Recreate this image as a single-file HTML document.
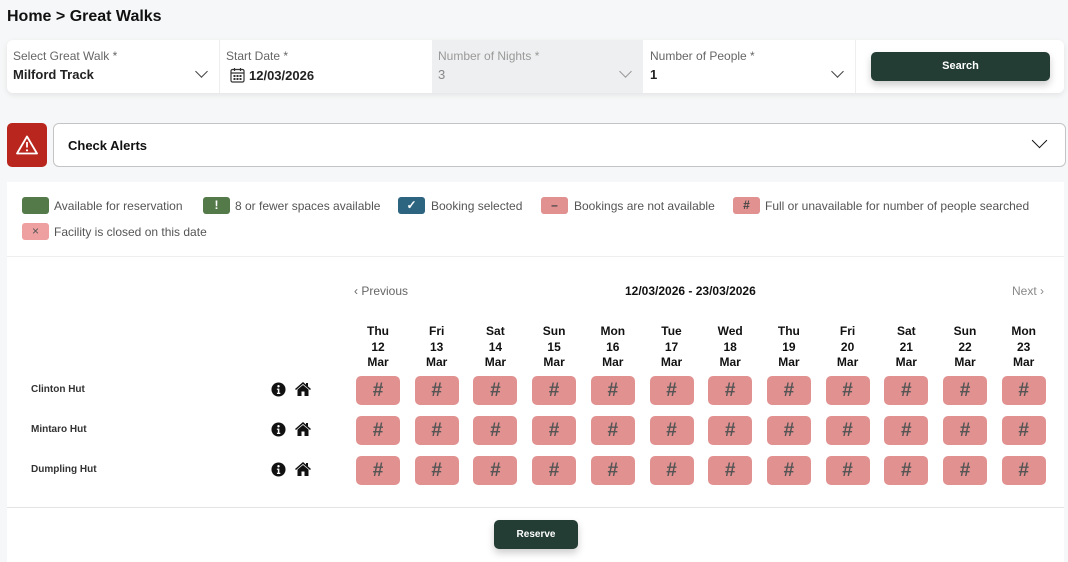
<!DOCTYPE html>
<html><head><meta charset="utf-8"><style>
*{box-sizing:border-box;margin:0;padding:0}
body{width:1068px;height:557px;background:#f6f7f8;font-family:"Liberation Sans",sans-serif;position:relative;overflow:hidden;color:#111}
.a{position:absolute}
.lbl{font-size:12px;color:#666}
.val{font-size:13px;color:#222;font-weight:bold}
.chev{position:absolute;width:9px;height:9px;border-right:1.4px solid #444;border-bottom:1.4px solid #444;transform:rotate(45deg)}
.sw{position:absolute;width:27px;height:17px;border-radius:3px;color:#fff;font-size:12px;font-weight:bold;text-align:center;line-height:17px}
.lt{position:absolute;font-size:12px;color:#555}
.cell{position:absolute;width:44px;height:29px;background:#e09190;border-radius:5px;color:#555;font-size:19px;font-weight:bold;text-align:center;line-height:29px}
.day{position:absolute;width:50px;text-align:center;font-size:12px;font-weight:bold;line-height:15.5px}
.hut{position:absolute;left:31px;font-size:10px;font-weight:bold;color:#333}
</style></head><body>
<div class="a" style="left:7px;top:8px;font-size:16px;font-weight:bold">Home &gt; Great Walks</div>

<div class="a" style="left:7px;top:40px;width:1057px;height:53px;background:#fff;border-radius:6px;box-shadow:0 2px 6px rgba(0,0,0,.08);overflow:hidden">
 <div class="a" style="left:212px;top:0;width:1px;height:53px;background:#eee"></div>
 <div class="a" style="left:425px;top:0;width:211px;height:53px;background:#eeeff0"></div>
 <div class="a" style="left:848px;top:0;width:1px;height:53px;background:#eee"></div>
 <div class="a lbl" style="left:6px;top:9px">Select Great Walk *</div>
 <div class="a val" style="left:6px;top:27px">Milford Track</div>
 <div class="chev" style="left:190px;top:27px"></div>
 <div class="a lbl" style="left:219px;top:9px">Start Date *</div>
 <svg class="a" style="left:223px;top:27px" width="15" height="16" viewBox="0 0 15 16"><rect x="1" y="2.5" width="13" height="12.5" rx="1.5" fill="none" stroke="#333" stroke-width="1.2"/><line x1="1" y1="6" x2="14" y2="6" stroke="#333" stroke-width="1.2"/><line x1="4.5" y1="1" x2="4.5" y2="4" stroke="#333" stroke-width="1.2"/><line x1="10.5" y1="1" x2="10.5" y2="4" stroke="#333" stroke-width="1.2"/><g fill="#333"><rect x="3.5" y="8" width="2" height="2"/><rect x="6.5" y="8" width="2" height="2"/><rect x="9.5" y="8" width="2" height="2"/><rect x="3.5" y="11" width="2" height="2"/><rect x="6.5" y="11" width="2" height="2"/><rect x="9.5" y="11" width="2" height="2"/></g></svg>
 <div class="a val" style="left:242px;top:28px">12/03/2026</div>
 <div class="a lbl" style="left:431px;top:9px;color:#999">Number of Nights *</div>
 <div class="a" style="left:431px;top:27px;font-size:13px;color:#888">3</div>
 <div class="chev" style="left:614px;top:27px;border-color:#999"></div>
 <div class="a lbl" style="left:643px;top:9px">Number of People *</div>
 <div class="a val" style="left:643px;top:27px">1</div>
 <div class="chev" style="left:826px;top:27px"></div>
 <div class="a" style="left:864px;top:12px;width:179px;height:29px;background:#233d35;border-radius:5px;color:#fff;font-size:11px;font-weight:bold;text-align:center;line-height:29px;box-shadow:0 4px 8px rgba(0,0,0,.2)">Search</div>
</div>

<div class="a" style="left:7px;top:123px;width:40px;height:44px;background:#b8261d;border-radius:5px">
 <svg class="a" style="left:9px;top:12px" width="22" height="20" viewBox="0 0 22 20"><path d="M11 1.5 L21 18.5 H1 Z" fill="none" stroke="#fff" stroke-width="1.8" stroke-linejoin="round"/><line x1="11" y1="7" x2="11" y2="12.5" stroke="#fff" stroke-width="1.8"/><circle cx="11" cy="15.3" r="1.1" fill="#fff"/></svg>
</div>
<div class="a" style="left:53px;top:123px;width:1013px;height:44px;background:#fff;border:1px solid #c4c4c4;border-radius:6px">
 <div class="a" style="left:14px;top:14px;font-size:13px;font-weight:bold">Check Alerts</div>
 <div class="chev" style="left:980px;top:11px;width:11px;height:11px;border-color:#111;border-width:0 1.8px 1.8px 0"></div>
</div>

<div class="a" style="left:7px;top:182px;width:1057px;height:380px;background:#fff"></div>
<div class="a" style="left:7px;top:256px;width:1057px;height:1px;background:#eee"></div>
<div class="sw" style="left:22px;top:197px;background:#557a4a"></div><div class="lt" style="left:54px;top:199px">Available for reservation</div>
<div class="sw" style="left:203px;top:197px;background:#557a4a">!</div><div class="lt" style="left:235px;top:199px">8 or fewer spaces available</div>
<div class="sw" style="left:398px;top:197px;background:#2d6480">✓</div><div class="lt" style="left:431px;top:199px">Booking selected</div>
<div class="sw" style="left:541px;top:197px;background:#e09190;color:#444">–</div><div class="lt" style="left:574px;top:199px">Bookings are not available</div>
<div class="sw" style="left:733px;top:197px;background:#e09190;color:#444">#</div><div class="lt" style="left:765px;top:199px">Full or unavailable for number of people searched</div>
<div class="sw" style="left:22px;top:223px;background:#eea0a0;color:#555;font-weight:normal">×</div><div class="lt" style="left:54px;top:225px">Facility is closed on this date</div>

<div class="a" style="left:354px;top:284px;font-size:12px;color:#666">&lsaquo; Previous</div>
<div class="a" style="left:625px;top:284px;font-size:12px;font-weight:bold">12/03/2026 - 23/03/2026</div>
<div class="a" style="left:1012px;top:284px;font-size:12px;color:#888">Next &rsaquo;</div>

<div class="hut" style="top:384px">Clinton Hut</div>
<div class="hut" style="top:424px">Mintaro Hut</div>
<div class="hut" style="top:464px">Dumpling Hut</div>

<div id="g"></div>
<script>
var d=[["Thu",12],["Fri",13],["Sat",14],["Sun",15],["Mon",16],["Tue",17],["Wed",18],["Thu",19],["Fri",20],["Sat",21],["Sun",22],["Mon",23]];
var h="";
for(var i=0;i<12;i++){var cx=378+i*58.7;
h+='<div class="day" style="left:'+(cx-25)+'px;top:324px">'+d[i][0]+'<br>'+d[i][1]+'<br>Mar</div>';
for(var r=0;r<3;r++)h+='<div class="cell" style="left:'+(cx-22)+'px;top:'+(376+r*40)+'px">#</div>';}
for(var r=0;r<3;r++){var y=382+r*40;
h+='<svg class="a" style="left:271px;top:'+y+'px" width="15" height="15" viewBox="0 0 16 16"><circle cx="8" cy="8" r="7.5" fill="#111"/><circle cx="8" cy="4.5" r="1.3" fill="#fff"/><path d="M6.3 7h2.6v4.5h1v1.3H6.3v-1.3h1V8.3h-1z" fill="#fff"/></svg>';
h+='<svg class="a" style="left:294px;top:'+(y-1)+'px" width="18" height="16" viewBox="0 0 18 16"><path d="M9 1 L1 8 L2 9 L9 3 L16 9 L17 8 L14 5.4 V2 H12 V3.6 Z" fill="#111"/><path d="M3.5 8.5 L9 4 L14.5 8.5 V15 H10.5 V10.5 H7.5 V15 H3.5 Z" fill="#111"/></svg>';}
document.getElementById("g").innerHTML=h;
</script>
<div class="a" style="left:7px;top:507px;width:1057px;height:1px;background:#e4e4e4"></div>
<div class="a" style="left:494px;top:520px;width:84px;height:29px;background:#233d35;border-radius:5px;color:#fff;font-size:10px;font-weight:bold;text-align:center;line-height:29px;box-shadow:0 4px 8px rgba(0,0,0,.2)">Reserve</div>
</body></html>
